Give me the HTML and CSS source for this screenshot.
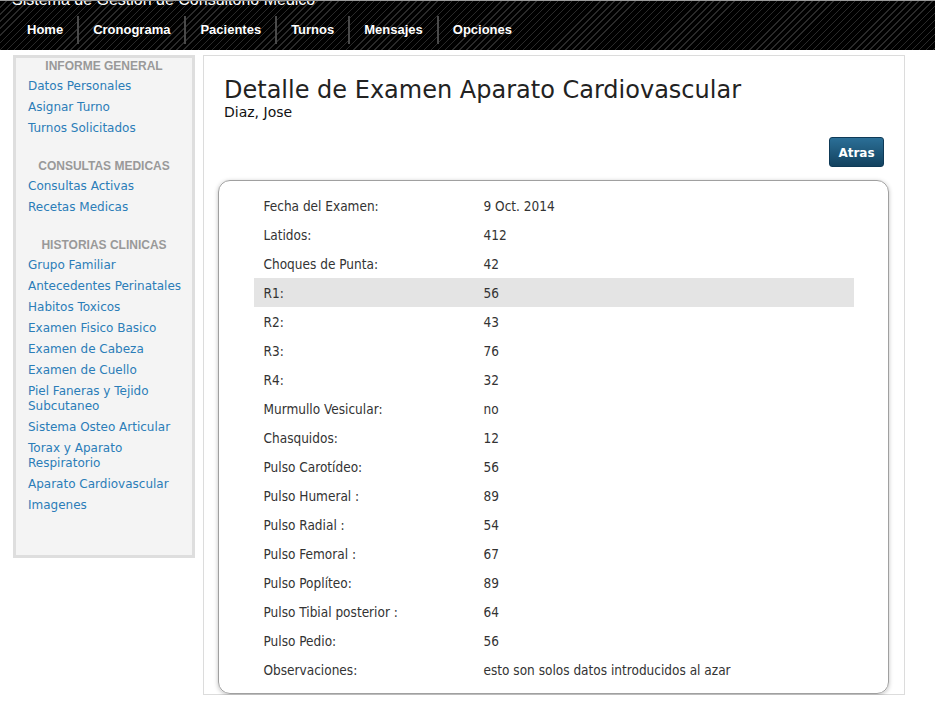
FILE: index.html
```html
<!DOCTYPE html>
<html lang="es">
<head>
<meta charset="utf-8">
<title>Detalle de Examen Aparato Cardiovascular</title>
<link rel="stylesheet" href="styles.css">
</head>
<body>
<header class="topbar">
  <div class="brand">Sistema de Gestion de Consultorio Medico</div>
  <nav class="mainnav">
    <a href="#">Home</a>
    <a href="#">Cronograma</a>
    <a href="#">Pacientes</a>
    <a href="#">Turnos</a>
    <a href="#">Mensajes</a>
    <a href="#">Opciones</a>
  </nav>
</header>
<div class="layout">
  <aside class="sidebar">
    <h3 class="side-title">INFORME GENERAL</h3>
    <ul class="side-list">
      <li><a href="#">Datos Personales</a></li>
      <li><a href="#">Asignar Turno</a></li>
      <li><a href="#">Turnos Solicitados</a></li>
    </ul>
    <h3 class="side-title">CONSULTAS MEDICAS</h3>
    <ul class="side-list">
      <li><a href="#">Consultas Activas</a></li>
      <li><a href="#">Recetas Medicas</a></li>
    </ul>
    <h3 class="side-title">HISTORIAS CLINICAS</h3>
    <ul class="side-list">
      <li><a href="#">Grupo Familiar</a></li>
      <li><a href="#">Antecedentes Perinatales</a></li>
      <li><a href="#">Habitos Toxicos</a></li>
      <li><a href="#">Examen Fisico Basico</a></li>
      <li><a href="#">Examen de Cabeza</a></li>
      <li><a href="#">Examen de Cuello</a></li>
      <li><a href="#">Piel Faneras y Tejido Subcutaneo</a></li>
      <li><a href="#">Sistema Osteo Articular</a></li>
      <li><a href="#">Torax y Aparato Respiratorio</a></li>
      <li><a href="#">Aparato Cardiovascular</a></li>
      <li><a href="#">Imagenes</a></li>
    </ul>
  </aside>
  <main class="content">
    <h1 class="page-title">Detalle de Examen Aparato Cardiovascular</h1>
    <p class="patient">Diaz, Jose</p>
    <div class="actions"><a class="btn" href="#">Atras</a></div>
    <div class="detail-box">
      <table class="detail">
        <tr><td class="lbl">Fecha del Examen:</td><td>9 Oct. 2014</td></tr>
        <tr><td class="lbl">Latidos:</td><td>412</td></tr>
        <tr><td class="lbl">Choques de Punta:</td><td>42</td></tr>
        <tr class="hl"><td class="lbl">R1:</td><td>56</td></tr>
        <tr><td class="lbl">R2:</td><td>43</td></tr>
        <tr><td class="lbl">R3:</td><td>76</td></tr>
        <tr><td class="lbl">R4:</td><td>32</td></tr>
        <tr><td class="lbl">Murmullo Vesicular:</td><td>no</td></tr>
        <tr><td class="lbl">Chasquidos:</td><td>12</td></tr>
        <tr><td class="lbl">Pulso Carotídeo:</td><td>56</td></tr>
        <tr><td class="lbl">Pulso Humeral :</td><td>89</td></tr>
        <tr><td class="lbl">Pulso Radial :</td><td>54</td></tr>
        <tr><td class="lbl">Pulso Femoral :</td><td>67</td></tr>
        <tr><td class="lbl">Pulso Poplíteo:</td><td>89</td></tr>
        <tr><td class="lbl">Pulso Tibial posterior :</td><td>64</td></tr>
        <tr><td class="lbl">Pulso Pedio:</td><td>56</td></tr>
        <tr><td class="lbl">Observaciones:</td><td>esto son solos datos introducidos al azar</td></tr>
      </table>
    </div>
  </main>
</div>
</body>
</html>
```
FILE: styles.css
```css
html, body {
  margin: 0;
  padding: 0;
  background: #fff;
}
body {
  font-family: "DejaVu Sans", Verdana, sans-serif;
  color: #222;
}
.topbar {
  height: 49px;
  border-top: 1px solid #9a9a9a;
  background-color: #000;
  background-image: repeating-linear-gradient(135deg, #000 0, #000 4px, #2a2a2a 4px, #2a2a2a 5px);
  overflow: hidden;
}
.brand {
  font-family: "Liberation Sans", Arial, sans-serif;
  font-size: 16px;
  line-height: 16px;
  color: #fff;
  margin: -9px 0 0 12px;
  height: 16px;
}
.mainnav {
  display: flex;
  margin: 8px 0 0 13px;
}
.mainnav a {
  font-family: "Liberation Sans", Arial, sans-serif;
  font-weight: bold;
  font-size: 13px;
  line-height: 28px;
  color: #fff;
  text-decoration: none;
  padding: 0 14px 0 14px;
  border-left: 2px solid #4a4a4a;
}
.mainnav a:first-child {
  border-left: 0;
}
.layout {
  display: flex;
  align-items: flex-start;
  gap: 8px;
  padding: 5px 0 0 13px;
}
.sidebar {
  width: 176px;
  border: 3px solid #dedede;
  background: #f4f4f4;
  padding: 0 0 39px 0;
}
.side-title {
  margin: 19px 0 1px 0;
  font-family: "Liberation Sans", Arial, sans-serif;
  font-size: 12px;
  font-weight: bold;
  line-height: 17px;
  color: #999;
  text-align: center;
}
.side-title:first-child {
  margin-top: 0;
}
.side-list {
  list-style: none;
  margin: 0;
  padding: 0 10px 0 12px;
}
.side-list li {
  padding: 3px 0;
  line-height: 15px;
  font-size: 12px;
}
.side-list a {
  color: #2b7db8;
  text-decoration: none;
}
.content {
  width: 700px;
  border: 1px solid #dcdcdc;
  height: 638px;
}
.page-title {
  margin: 20px 0 0 20px;
  font-size: 24px;
  font-weight: normal;
  line-height: 28px;
  color: #222;
}
.patient {
  margin: 0 0 0 20px;
  font-size: 14px;
  line-height: 17px;
  color: #111;
}
.actions {
  display: flex;
  justify-content: flex-end;
  margin: 16px 20px 0 0;
}
.btn {
  display: block;
  width: 53px;
  height: 28px;
  line-height: 31px;
  text-align: center;
  font-size: 12px;
  font-weight: bold;
  color: #fff;
  text-decoration: none;
  border: 1px solid #0f3a57;
  border-radius: 3px;
  background: linear-gradient(#2b6f97, #13425f);
}
.detail-box {
  margin: 13px 15px 0 14px;
  border: 1px solid #a0a0a0;
  border-radius: 12px;
  box-shadow: 0 1px 4px rgba(0, 0, 0, 0.25);
  padding: 10px 0 9px 0;
}
.detail {
  width: 600px;
  margin: 0 auto;
  border-collapse: collapse;
  font-family: "DejaVu Sans Condensed", "DejaVu Sans", sans-serif;
  font-size: 13.5px;
  color: #333;
}
.detail td {
  height: 29px;
  padding: 0;
  vertical-align: middle;
}
.detail td.lbl {
  width: 220px;
  padding-left: 10px;
}
.detail tr.hl td {
  background: #e4e4e4;
}
```
